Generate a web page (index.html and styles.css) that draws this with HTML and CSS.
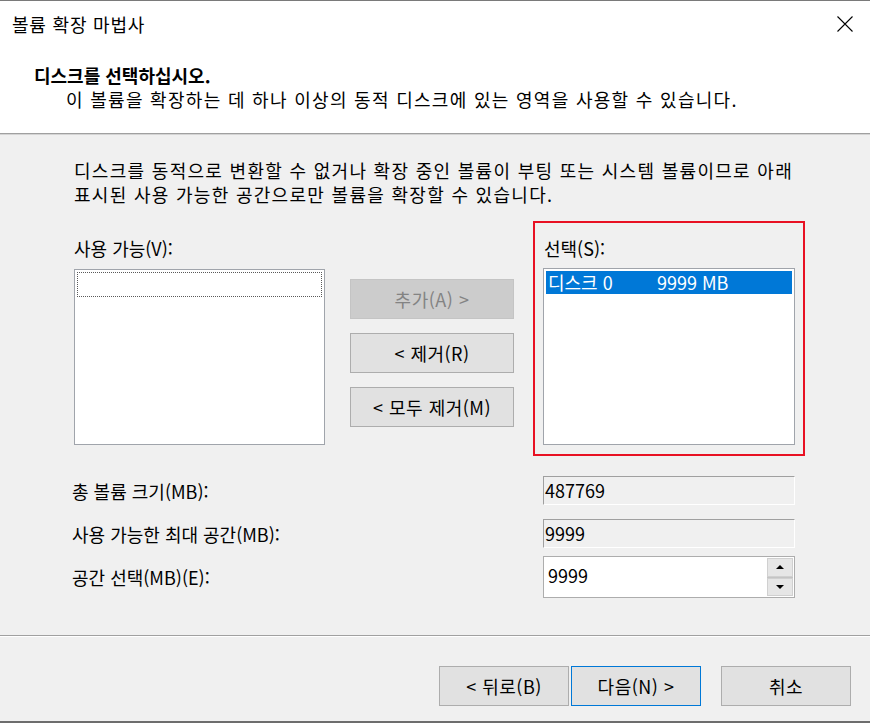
FILE: index.html
```html
<!DOCTYPE html>
<html lang="ko">
<head>
    <meta charset="UTF-8">
    <meta name="viewport" content="width=device-width, initial-scale=1.0">
    <title>볼륨 확장 마법사</title>
    <link rel="stylesheet" href="styles.css">
</head>
<body>

    <div class="dialog">
        <div class="titlebar">
            <span class="title">볼륨 확장 마법사</span>
            <svg class="close" width="16" height="16" viewBox="0 0 16 16">
                <path d="M0.5 0.5 L15.5 15.5 M15.5 0.5 L0.5 15.5" stroke="#000" stroke-width="1.1" fill="none"/>
            </svg>
        </div>

        <div class="header">
            <div class="heading">디스크를 선택하십시오.</div>
            <div class="subheading">이 볼륨을 확장하는 데 하나 이상의 동적 디스크에 있는 영역을 사용할 수 있습니다.</div>
        </div>

        <div class="content">
            <p class="intro">디스크를 동적으로 변환할 수 없거나 확장 중인 볼륨이 부팅 또는 시스템 볼륨이므로 아래<br>표시된 사용 가능한 공간으로만 볼륨을 확장할 수 있습니다.</p>

            <div class="pickers">
                <div class="picker available">
                    <label>사용 가능(V):</label>
                    <div class="listbox">
                        <div class="item focused"></div>
                    </div>
                </div>

                <div class="movers">
                    <button class="btn" disabled>추가(A) &gt;</button>
                    <button class="btn">&lt; 제거(R)</button>
                    <button class="btn">&lt; 모두 제거(M)</button>
                </div>

                <div class="picker chosen">
                    <label>선택(S):</label>
                    <div class="listbox">
                        <div class="item active">
                            <span class="disk-name">디스크 0</span>
                            <span>9999 MB</span>
                        </div>
                    </div>
                </div>
            </div>

            <div class="fields">
                <div class="field-row">
                    <span class="field-label">총 볼륨 크기(MB):</span>
                    <div class="readonly">487769</div>
                </div>
                <div class="field-row">
                    <span class="field-label">사용 가능한 최대 공간(MB):</span>
                    <div class="readonly">9999</div>
                </div>
                <div class="field-row">
                    <span class="field-label">공간 선택(MB)(E):</span>
                    <div class="spin">
                        <span class="spin-value">9999</span>
                        <div class="spin-buttons">
                            <div class="spin-btn"><span class="arrow up"></span></div>
                            <div class="spin-btn"><span class="arrow down"></span></div>
                        </div>
                    </div>
                </div>
            </div>
        </div>

        <div class="footer">
            <button class="btn wizard">&lt; 뒤로(B)</button>
            <button class="btn wizard default">다음(N) &gt;</button>
            <button class="btn wizard cancel">취소</button>
        </div>
    </div>

</body>
</html>
```

FILE: styles.css
```css
body {
    margin: 0;
    font-family: "Noto Sans CJK KR", "Noto Sans", sans-serif;
    font-size: 18px;
    color: #000;
    background-color: #f0f0f0;
}
.dialog {
    width: 870px;
    height: 723px;
    box-sizing: border-box;
    display: flex;
    flex-direction: column;
    border-top: 1px solid #7a7a7a;
    border-bottom: 2px solid #6d6d6d;
    background-color: #f0f0f0;
}
.titlebar {
    height: 47px;
    display: flex;
    justify-content: space-between;
    align-items: flex-start;
    padding: 11px 17px 0 12px;
    box-sizing: border-box;
    background-color: white;
}
.title {
    line-height: 24px;
    letter-spacing: 0.8px;
}
.close {
    margin-top: 4px;
}
.header {
    background-color: white;
    padding: 15px 0 22px 34px;
    border-bottom: 1px solid #a0a0a0;
    line-height: 24px;
}
.heading {
    font-weight: bold;
}
.subheading {
    padding-left: 32px;
    letter-spacing: 1.3px;
}
.content {
    flex: 1;
    border-top: 1px solid #d4d4d4;
    padding: 23px 0 0 74px;
}
.intro {
    margin: 0;
    line-height: 24px;
    white-space: nowrap;
    letter-spacing: 1.3px;
}
.pickers {
    display: flex;
    align-items: flex-start;
    margin-top: 15px;
    height: 235px;
}
.picker label {
    display: block;
    line-height: 24px;
}
.available {
    width: 251px;
    padding-top: 15px;
}
.available .listbox {
    margin-top: 9px;
}
.listbox {
    height: 176px;
    box-sizing: border-box;
    border: 1px solid #a0a4ab;
    background-color: white;
    padding: 2px;
}
.item {
    height: 23px;
    box-sizing: border-box;
    line-height: 23px;
}
.focused {
    border: 1px dotted #5a5a5a;
    height: 25px;
}
.movers {
    width: 164px;
    margin: 58px 0 0 25px;
    display: flex;
    flex-direction: column;
    gap: 14px;
}
.btn {
    height: 40px;
    font-family: inherit;
    font-size: 18px;
    letter-spacing: 0.5px;
    color: #000;
    background-color: #e1e1e1;
    border: 1px solid #adadad;
    padding: 0;
}
.btn:disabled {
    background-color: #cccccc;
    border-color: #c4c4c4;
    color: #838383;
}
.chosen {
    width: 272px;
    height: 235px;
    box-sizing: border-box;
    margin-left: 19px;
    border: 2px solid #e81123;
    padding: 13px 8px 0 8px;
}
.chosen label {
    padding-left: 1px;
}
.chosen .listbox {
    margin-top: 8px;
    height: 177px;
}
.active {
    background-color: #0078d7;
    color: white;
    display: flex;
    padding-left: 2px;
}
.disk-name {
    width: 109px;
}
.fields {
    margin: 13px 0 0 -2px;
}
.field-row {
    height: 43px;
    display: flex;
    align-items: center;
}
.field-label {
    width: 471px;
}
.readonly {
    width: 252px;
    height: 29px;
    box-sizing: border-box;
    border-top: 1px solid #a0a0a0;
    border-left: 1px solid #a0a0a0;
    border-right: 1px solid #fff;
    border-bottom: 1px solid #fff;
    line-height: 27px;
    padding-left: 1px;
}
.spin {
    width: 252px;
    height: 42px;
    margin-top: 1px;
    box-sizing: border-box;
    border: 1px solid #adadad;
    background-color: white;
    display: flex;
    justify-content: space-between;
    align-items: center;
}
.spin-value {
    padding-left: 4px;
    margin-top: -4px;
}
.spin-buttons {
    width: 26px;
    height: 38px;
    margin-right: 1px;
    display: flex;
    flex-direction: column;
    gap: 1px;
    background-color: #c4c4c4;
}
.spin-btn {
    flex: 1;
    background-color: #e6e6e6;
    border: 1px solid #d0d0d0;
    display: flex;
    justify-content: center;
    align-items: center;
}
.arrow {
    width: 0;
    height: 0;
    border-left: 4px solid transparent;
    border-right: 4px solid transparent;
}
.arrow.up {
    border-bottom: 4px solid #000;
}
.arrow.down {
    border-top: 4px solid #000;
}
.footer {
    height: 86px;
    border-top: 1px solid #a0a0a0;
    box-shadow: inset 0 1px 0 #fff;
    display: flex;
    justify-content: flex-end;
    align-items: flex-start;
    padding: 30px 19px 0 0;
    box-sizing: border-box;
}
.wizard {
    width: 130px;
}
.default {
    margin-left: 2px;
    border-color: #0078d7;
}
.cancel {
    margin-left: 20px;
}
```
